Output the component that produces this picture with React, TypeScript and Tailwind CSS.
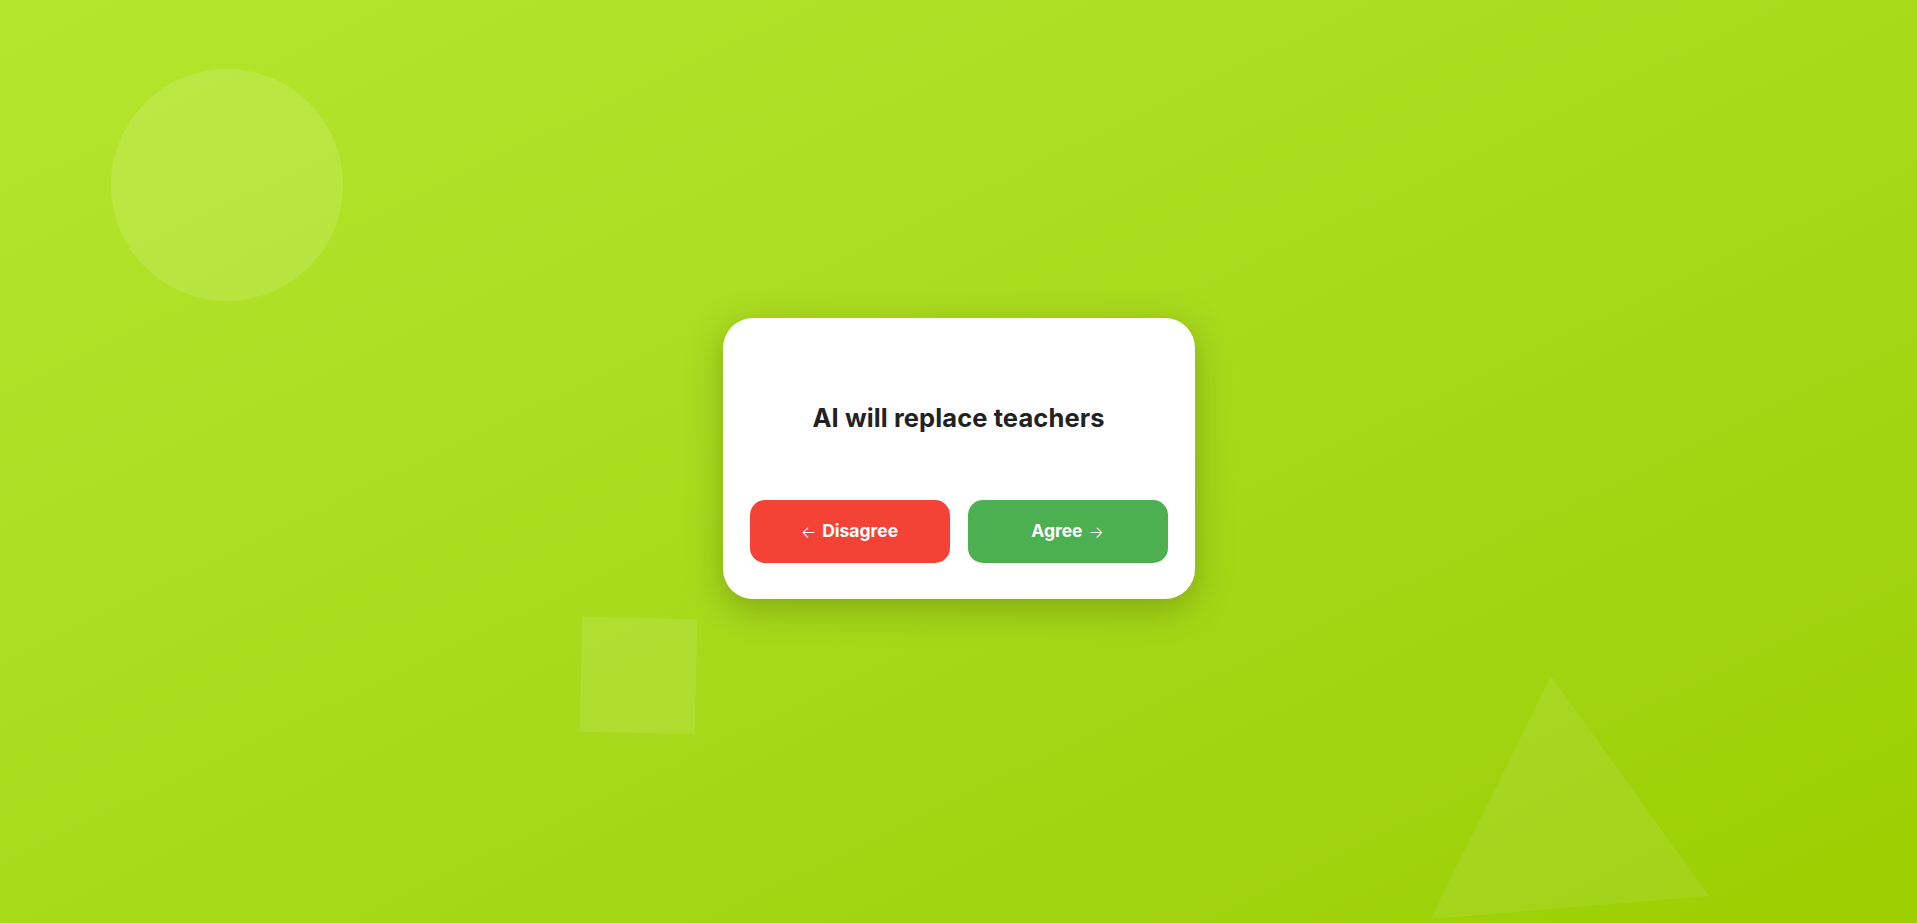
import React from "react";

const App = () => {
  return (
    <main
      className="relative flex min-h-screen w-full items-center justify-center overflow-hidden bg-linear-to-br from-[#b6e62c] to-[#9cce00]"
      style={{ fontFamily: "Inter, 'Noto Sans', sans-serif" }}
    >
      {/* Background shapes */}
      <div className="absolute left-[111px] top-[69px] h-[232px] w-[232px] rounded-full bg-white/[0.12]" />
      <div className="absolute left-[581px] top-[618px] h-[115px] w-[115px] rotate-[1.2deg] bg-white/[0.1]" />
      <svg
        className="absolute left-0 top-0 h-full w-full pointer-events-none"
        viewBox="0 0 1917 923"
        preserveAspectRatio="none"
      >
        <polygon points="1551,676 1709,896 1431,919" fill="rgba(255,255,255,0.08)" />
      </svg>

      {/* Card */}
      <div className="relative z-10 mb-[6px] flex w-[472px] flex-col gap-[18px] rounded-[30px] bg-white px-[27px] pt-9 pb-9 shadow-[0_10px_35px_rgba(60,80,0,0.35)]">
        <div className="flex h-[128px] items-center justify-center">
          <h2 className="text-[25.5px] font-bold tracking-[0.1px] text-[#222222]">AI will replace teachers</h2>
        </div>
        <div className="flex gap-[18px]">
          <button className="flex h-[63px] flex-1 items-center justify-center rounded-[15px] bg-[#f44336] text-[17.5px] font-bold text-white">
            <span className="mr-[6px] text-[16px] font-light">←</span>Disagree
          </button>
          <button className="flex h-[63px] flex-1 items-center justify-center rounded-[15px] bg-[#4caf50] text-[17.5px] font-bold text-white">
            Agree<span className="ml-[6px] text-[16px] font-light">→</span>
          </button>
        </div>
      </div>
    </main>
  );
};

export default App;
